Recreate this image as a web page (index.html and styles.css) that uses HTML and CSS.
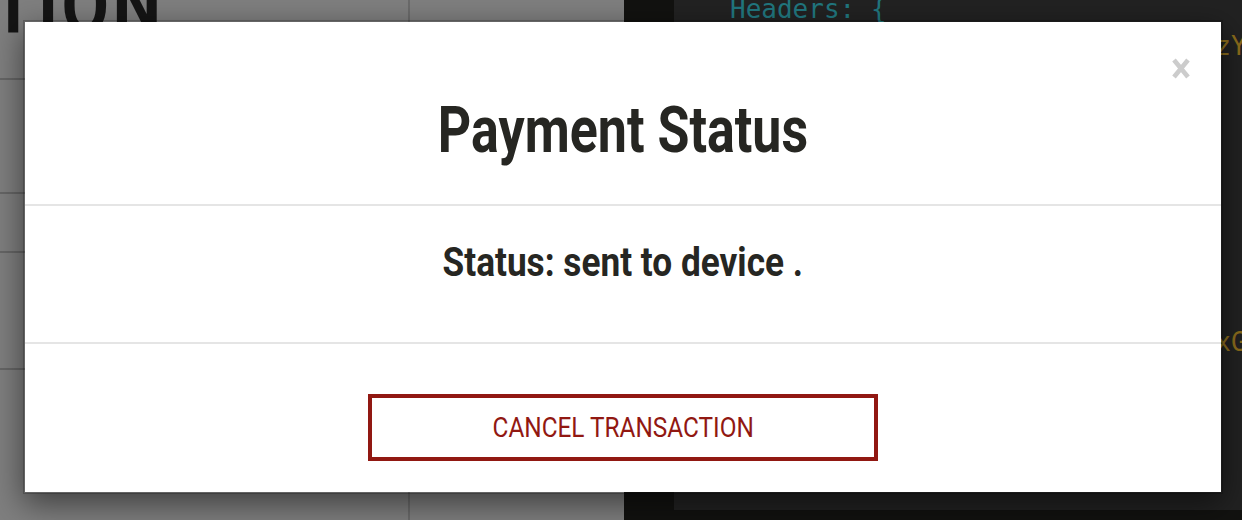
FILE: index.html
```html
<!DOCTYPE html>
<html lang="en">
<head>
<meta charset="utf-8">
<title>Payment Status</title>
<link rel="stylesheet" href="styles.css">
</head>
<body>
<div class="screen">
  <main class="page">
    <div class="col-main">
      <div class="row row-head"><h1 class="big-title"><span class="squeeze">TION</span></h1></div>
      <div class="row row-a"></div>
      <div class="row row-b"></div>
      <div class="row row-c"></div>
      <div class="row row-d"></div>
    </div>
    <div class="col-side"></div>
  </main>
  <aside class="dev">
    <div class="dev-top">
      <div class="gutter"></div>
      <pre class="code"><span class="k">Headers: {</span>
<span class="k">    Authorization: </span><span class="s">"Basic MTIzNzY0NTY3ODk="</span>
    
    
    
    
    
    
    
<span class="k">    "Signature": </span><span class="s">"aGVsbG8gd29ybxGQ="</span>
</pre>
    </div>
    <div class="dev-bottom"></div>
  </aside>
</div>

<div class="modal" role="dialog" aria-labelledby="modal-title">
  <button class="close" aria-label="Close">
    <svg width="18" height="21" viewBox="0 0 18 21"><path d="M2 2 L16 19 M16 2 L2 19" stroke="#cccccc" stroke-width="4.6" fill="none"/></svg>
  </button>
  <header class="modal-header">
    <h2 id="modal-title" class="modal-title"><span class="squeeze t1">Payment Status</span></h2>
  </header>
  <section class="modal-body">
    <p class="status"><span class="squeeze t2">Status: sent to device .</span></p>
  </section>
  <footer class="modal-footer">
    <button class="btn-cancel"><span class="squeeze t3">CANCEL TRANSACTION</span></button>
  </footer>
</div>
</body>
</html>
```

FILE: styles.css
```css
* { box-sizing: border-box; }
html, body { margin: 0; padding: 0; }
body {
  width: 1242px;
  height: 520px;
  overflow: hidden;
  position: relative;
  font-family: Roboto, "Liberation Sans", sans-serif;
  background: #7f7f7f;
}
.screen {
  display: flex;
  height: 520px;
}
.page {
  flex: none;
  width: 624px;
  background: #7f7f7f;
  display: flex;
  overflow: hidden;
}
.col-main {
  flex: none;
  width: 410px;
  border-right: 2px solid #6b6b6b;
  display: flex;
  flex-direction: column;
}
.col-side { flex: 1; }
.row { border-bottom: 2px solid #666666; flex: none; }
.row-head { height: 80px; overflow: hidden; }
.row-a { height: 114px; }
.row-b { height: 59px; }
.row-c { height: 117px; }
.row-d { flex: 1; border-bottom: none; }
.big-title {
  margin: -35px 0 0 0;
  font-size: 82px;
  line-height: 80px;
  font-weight: 700;
  color: #151515;
  letter-spacing: 4px;
}
.squeeze {
  display: inline-block;
  transform-origin: 0 50%;
}
.big-title .squeeze { transform: scaleX(0.84); margin-left: -8px; }

.dev {
  flex: 1;
  min-width: 0;
  display: flex;
  flex-direction: column;
}
.dev-top {
  height: 510px;
  display: flex;
  background: #222222;
  overflow: hidden;
}
.gutter { width: 50px; background: #121210; flex: none; }
.code {
  margin: -9px 0 0 0;
  padding-left: 56px;
  font-family: "DejaVu Sans Mono", "Liberation Mono", monospace;
  font-size: 26px;
  line-height: 37px;
  color: #21777f;
  white-space: pre;
}
.code .k { color: #21777f; }
.code .s { color: #8c6d1c; }
.dev-bottom { flex: 1; background: #121210; }

.modal {
  position: absolute;
  left: 23px;
  top: 20px;
  width: 1200px;
  height: 474px;
  background: #ffffff;
  border: 2px solid rgba(0, 0, 0, 0.2);
  background-clip: padding-box;
  box-shadow: 0 10px 30px rgba(0, 0, 0, 0.5);
  display: flex;
  flex-direction: column;
  color: #262622;
}
.close {
  position: absolute;
  left: 1147px;
  top: 36px;
  width: 18px;
  height: 21px;
  padding: 0;
  border: 0;
  background: transparent;
  display: block;
}
.close svg { display: block; }
.modal-header {
  height: 184px;
  padding-top: 77px;
  border-bottom: 2px solid #e5e5e5;
  text-align: center;
}
.modal-title {
  margin: 0;
  font-size: 64px;
  line-height: 64px;
  font-weight: 700;
}
.modal-body {
  height: 138px;
  padding-top: 37px;
  border-bottom: 2px solid #e5e5e5;
  text-align: center;
}
.status {
  margin: 0;
  font-size: 40px;
  line-height: 40px;
  font-weight: 700;
}
.modal-footer {
  flex: 1;
  display: flex;
  justify-content: center;
  padding-top: 50px;
}
.btn-cancel {
  width: 510px;
  height: 67px;
  border: 4px solid #911812;
  background: #ffffff;
  color: #911812;
  font-family: Roboto, "Liberation Sans", sans-serif;
  font-size: 28px;
  line-height: 28px;
  font-weight: 400;
  display: flex;
  align-items: center;
  justify-content: center;
  padding: 0;
}
.t1, .t2, .t3 { transform-origin: 50% 50%; }
.t1 { transform: scaleX(0.812); }
.t2 { transform: scaleX(0.88); }
.t3 { transform: scaleX(0.87); }
```
